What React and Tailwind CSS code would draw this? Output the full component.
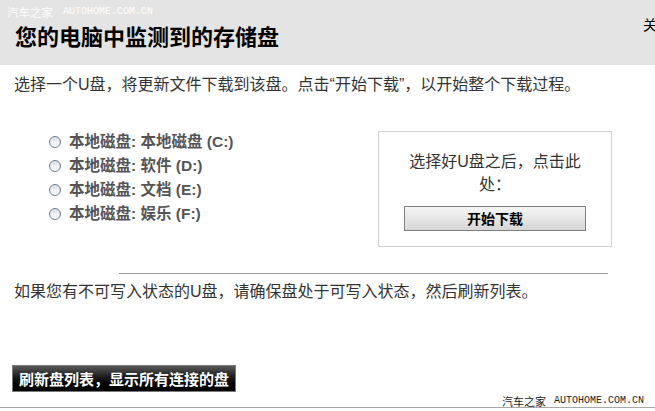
import React from "react";

const drives = [
  "本地磁盘: 本地磁盘 (C:)",
  "本地磁盘: 软件 (D:)",
  "本地磁盘: 文档 (E:)",
  "本地磁盘: 娱乐 (F:)",
];

function Radio() {
  return (
    <span className="inline-block w-[12px] h-[12px] rounded-full border border-[#6b7b8c] bg-gradient-to-b from-[#d8dde3] to-[#ffffff] shrink-0" />
  );
}

export default function App() {
  return (
    <div className="relative w-[655px] h-[411px] bg-white overflow-hidden font-['Liberation_Sans','Noto_Sans_CJK_SC',sans-serif]">
      {/* watermark top-left */}
      <div className="absolute left-[7px] top-[5px] flex items-center gap-[10px] text-white/90 leading-[14px]">
        <span className="text-[11.5px] font-['Noto_Sans_CJK_SC',sans-serif]">汽车之家</span>
        <span className="text-[10px] font-['Liberation_Mono',monospace]">AUTOHOME.COM.CN</span>
      </div>

      {/* header */}
      <div className="h-[65px] bg-[#e4e4e4] flex items-start justify-between">
        <h1 className="pl-[15px] pt-[21px] text-[22px] leading-[28px] font-bold text-black font-['Noto_Sans_CJK_SC',sans-serif]">
          您的电脑中监测到的存储盘
        </h1>
        <div className="w-[12px] overflow-hidden pt-[15px] shrink-0">
          <span className="block whitespace-nowrap text-[14px] leading-[18px] text-black font-['Noto_Sans_CJK_SC',sans-serif]">
            关闭
          </span>
        </div>
      </div>

      {/* instruction */}
      <p className="mt-[10px] pl-[14px] text-[16px] leading-[20px] text-[#333]">
        选择一个U盘，将更新文件下载到该盘。点击“开始下载”，以开始整个下载过程。
      </p>

      {/* content row */}
      <div className="mt-[35px] flex items-start">
        <div className="pl-[49px] w-[378px] flex flex-col">
          {drives.map((d) => (
            <label key={d} className="h-[24px] flex items-center gap-[8px]">
              <Radio />
              <span className="text-[15.5px] leading-[24px] font-bold text-[#555]">{d}</span>
            </label>
          ))}
        </div>
        <div className="mt-[1px] w-[234px] h-[116px] border border-[#d0d0d0] flex flex-col items-center pt-[18px]">
          <p className="w-[180px] text-center text-[16px] leading-[23px] text-[#333]">
            选择好U盘之后，点击此处：
          </p>
          <button className="mt-[10px] w-[182px] h-[25px] border border-[#808080] bg-gradient-to-b from-[#f6f6f6] to-[#d6d6d6] text-[14px] font-bold text-black leading-[23px] font-['Noto_Sans_CJK_SC',sans-serif]">
            开始下载
          </button>
        </div>
      </div>

      {/* divider */}
      <div className="mt-[26px] ml-[119px] w-[489px] h-[1px] bg-[#9a9a9a]" />

      <p className="mt-[8px] pl-[14px] text-[16px] leading-[20px] text-[#333]">
        如果您有不可写入状态的U盘，请确保盘处于可写入状态，然后刷新列表。
      </p>

      <button className="mt-[63px] ml-[12px] w-[224px] h-[27px] border border-[#7a7a7a] bg-gradient-to-b from-[#5a5a5a] via-[#151515] to-[#000000] text-white text-[15px] font-bold leading-[25px] font-['Noto_Sans_CJK_SC',sans-serif]">
        刷新盘列表，显示所有连接的盘
      </button>

      {/* bottom line */}
      <div className="mt-[15px] h-[1px] bg-[#a8a8a8]" />

      {/* watermark bottom-right */}
      <div className="absolute left-[502px] top-[394px] flex items-center gap-[8px] text-[#222] leading-[14px]">
        <span className="text-[11px] font-['Noto_Sans_CJK_SC',sans-serif]">汽车之家</span>
        <span className="text-[10px] font-['Liberation_Mono',monospace]">AUTOHOME.COM.CN</span>
      </div>
    </div>
  );
}
